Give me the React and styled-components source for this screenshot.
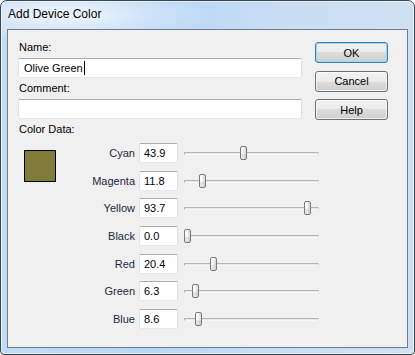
import React from 'react';
import styled, { createGlobalStyle } from 'styled-components';

const GlobalStyle = createGlobalStyle`
    html, body {
        margin: 0;
        padding: 0;
        background: #ffffff;
    }
    * {
        box-sizing: border-box;
    }
`

const channels = [
    { name: 'Cyan', value: 43.9 },
    { name: 'Magenta', value: 11.8 },
    { name: 'Yellow', value: 93.7 },
    { name: 'Black', value: 0.0 },
    { name: 'Red', value: 20.4 },
    { name: 'Green', value: 6.3 },
    { name: 'Blue', value: 8.6 },
];

const App = () => {
    return (
        <>
            <GlobalStyle />
            <Window>
                {/* ============== TitleBar ============== */}
                <TitleBar>Add Device Color</TitleBar>

                {/* ============== Client ============== */}
                <Client>
                    <MainColumn>
                        <FieldLabel>Name:</FieldLabel>
                        <TextBox>
                            Olive Green<Caret />
                        </TextBox>

                        <FieldLabel $top={4}>Comment:</FieldLabel>
                        <TextBox />

                        <FieldLabel $top={4}>Color Data:</FieldLabel>

                        <ColorData>
                            <Swatch />
                            <Rows>
                                {channels.map((c) => (
                                    <Row key={c.name}>
                                        <RowLabel>{c.name}</RowLabel>
                                        <ValueBox>{c.value.toFixed(1)}</ValueBox>
                                        <Slider>
                                            <Track />
                                            <Thumb style={{ left: Math.round(c.value * 1.28) }} />
                                        </Slider>
                                    </Row>
                                ))}
                            </Rows>
                        </ColorData>
                    </MainColumn>

                    <ButtonColumn>
                        <Button $default>OK</Button>
                        <Button>Cancel</Button>
                        <Button>Help</Button>
                    </ButtonColumn>
                </Client>
            </Window>
        </>
    );
}

const Window = styled.div`
    width: 415px;
    height: 355px;
    display: flex;
    flex-direction: column;
    border: 1px solid #3a4552;
    border-radius: 7px 7px 4px 4px;
    background:
        radial-gradient(ellipse 140px 30px at 70px 14px, rgba(255,255,255,0.75), rgba(255,255,255,0) 100%),
        linear-gradient(90deg, #c3dbf3 0%, #b7d6f6 35%, #c9def4 70%, #cfe0f2 100%);
    box-shadow: inset 0 0 0 1px rgba(255,255,255,0.55);
    overflow: hidden;
`

const TitleBar = styled.div`
    height: 28px;
    padding: 6px 0 0 7px;
    font-family: "Liberation Sans", Arial, sans-serif;
    font-size: 12px;
    line-height: 15px;
    color: #000;
    text-shadow: 0 0 6px rgba(255,255,255,0.9);
`

const Client = styled.div`
    flex: 1;
    margin: 0 6px 6px 6px;
    border: 1px solid #6d7b8b;
    background: #f0f0f0;
    display: flex;
    font-family: "Liberation Sans", Arial, sans-serif;
    font-size: 11px;
    color: #000;
`

const MainColumn = styled.div`
    width: 294px;
    flex-shrink: 0;
    padding: 11px 0 0 10px;
    display: flex;
    flex-direction: column;
`

const FieldLabel = styled.div`
    height: 13px;
    line-height: 13px;
    padding-left: 1px;
    margin-top: ${(p) => p.$top || 0}px;
    margin-bottom: 4px;
`

const TextBox = styled.div`
    width: 284px;
    height: 20px;
    border: 1px solid;
    border-color: #abadb3 #dbdfe6 #e3e9ef #e2e3ea;
    border-radius: 2px;
    background: #fff;
    padding: 0 0 0 5px;
    line-height: 18px;
    display: flex;
    align-items: center;
    white-space: pre;
`

const Caret = styled.span`
    display: inline-block;
    width: 1px;
    height: 14px;
    margin-left: 1px;
    background: #000;
`

const ColorData = styled.div`
    display: flex;
    margin-top: 3px;
`

const Swatch = styled.div`
    flex-shrink: 0;
    width: 32px;
    height: 32px;
    margin: 7px 0 0 6px;
    border: 1px solid #000;
    background: #807b36;
`

const Rows = styled.div`
    display: flex;
    flex-direction: column;
    gap: 7.67px;
    margin-left: 4px;
`

const Row = styled.div`
    display: flex;
    align-items: center;
    height: 20px;
`

const RowLabel = styled.div`
    width: 75px;
    flex-shrink: 0;
    text-align: right;
    color: #1b2a3c;
`

const ValueBox = styled.div`
    width: 39px;
    height: 20px;
    flex-shrink: 0;
    margin-left: 4px;
    border: 1px solid;
    border-color: #abadb3 #dbdfe6 #e3e9ef #e2e3ea;
    border-radius: 2px;
    background: #fff;
    padding-left: 4px;
    line-height: 18px;
`

const Slider = styled.div`
    position: relative;
    width: 135px;
    height: 20px;
    flex-shrink: 0;
    margin-left: 6px;
    display: flex;
    align-items: center;
`

const Track = styled.div`
    width: 100%;
    height: 3px;
    margin-top: 1px;
    border-top: 1px solid #b4b4b4;
    border-left: 1px solid #b4b4b4;
    border-right: 1px solid #d8d8d8;
    background: #e7e7e7;
    border-bottom: 1px solid #f8f8f8;
`

const Thumb = styled.div`
    position: absolute;
    top: 3px;
    width: 7px;
    height: 14px;
    border: 1px solid #7a7a7a;
    border-radius: 2px;
    background: linear-gradient(90deg, #ffffff 0%, #f4f4f4 45%, #d6d6d6 100%);
    box-shadow: inset 0 -5px 0 rgba(190,190,190,0.35);
`

const ButtonColumn = styled.div`
    display: flex;
    flex-direction: column;
    gap: 7.5px;
    padding-top: 12px;
    margin-left: 13px;
`

const Button = styled.div`
    width: 73px;
    height: 21px;
    display: flex;
    align-items: center;
    justify-content: center;
    border: 1px solid ${(p) => (p.$default ? '#3c7fb1' : '#707070')};
    border-radius: 3px;
    background: linear-gradient(180deg, #f2f2f2 0%, #ebebeb 50%, #dddddd 50%, #cfcfcf 100%);
    box-shadow: inset 0 0 0 1px ${(p) => (p.$default ? '#8fdcf8' : 'rgba(255,255,255,0.7)')};
    color: #000;
`

export default App
